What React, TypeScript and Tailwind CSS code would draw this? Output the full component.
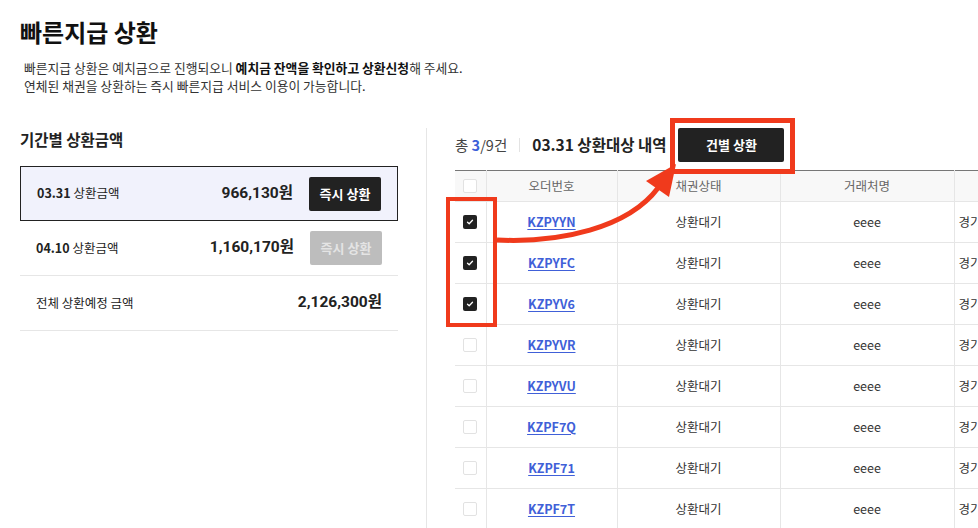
import React from 'react';

const font = { fontFamily: '"Noto Sans CJK KR", "Noto Sans", sans-serif' };
const num = { fontFamily: 'Roboto, "Noto Sans CJK KR", sans-serif' };

const rows = [
  { id: 'KZPYYN', checked: true },
  { id: 'KZPYFC', checked: true },
  { id: 'KZPYV6', checked: true },
  { id: 'KZPYVR', checked: false },
  { id: 'KZPYVU', checked: false },
  { id: 'KZPF7Q', checked: false },
  { id: 'KZPF71', checked: false },
  { id: 'KZPF7T', checked: false },
];

const Check: React.FC<{ checked: boolean }> = ({ checked }) =>
  checked ? (
    <span className="mx-auto flex h-[14px] w-[14px] items-center justify-center rounded-[2px] bg-[#222]">
      <svg width="8" height="8" viewBox="0 0 8 8">
        <path d="M1.5 4.2 L3.2 5.8 L6.5 2.3" fill="none" stroke="#fff" strokeWidth="1.3" strokeLinecap="round" strokeLinejoin="round" />
      </svg>
    </span>
  ) : (
    <span className="mx-auto block h-[14px] w-[14px] rounded-[2px] border border-[#e2e2e2] bg-white" />
  );

export default function App() {
  return (
    <div className="relative h-[528px] w-[978px] overflow-hidden bg-white text-[#222]" style={font}>
      <div className="pl-5 pt-4">
        <h1 className="text-[24px] font-bold leading-[32px] text-[#111]">빠른지급 상환</h1>
        <div className="mt-[11px] pl-1 text-[12.8px] leading-[18px] text-[#333]">
          <p>
            빠른지급 상환은 예치금으로 진행되오니 <b className="font-bold text-[#111]">예치금 잔액을 확인하고 상환신청</b>해 주세요.
          </p>
          <p>연체된 채권을 상환하는 즉시 빠른지급 서비스 이용이 가능합니다.</p>
        </div>
      </div>

      <div className="mt-[33px] flex">
        <div className="ml-5 w-[378px] shrink-0 whitespace-nowrap">
          <h2 className="text-[15.5px] font-bold leading-[22px] text-[#222]">기간별 상환금액</h2>
          <div className="mt-4">
            <div className="flex h-[55px] items-center border border-[#222] bg-[#f1f2fc] px-4">
              <span className="flex-1 text-[12.5px]">
                <b className="font-bold">03.31</b> 상환금액
              </span>
              <span className="text-[15.5px] font-bold" style={num}>966,130원</span>
              <button className="ml-4 h-[34px] w-[72px] rounded-[2px] bg-[#222] text-[13px] font-bold text-white">즉시 상환</button>
            </div>
            <div className="flex h-[55px] items-center border-b border-[#e6e6e6] px-4">
              <span className="flex-1 text-[12.5px]">
                <b className="font-bold">04.10</b> 상환금액
              </span>
              <span className="text-[15.5px] font-bold" style={num}>1,160,170원</span>
              <button className="ml-4 h-[34px] w-[72px] rounded-[2px] bg-[#bdbdbd] text-[13px] font-bold text-[#e4e4e4]">즉시 상환</button>
            </div>
            <div className="flex h-[55px] items-center border-b border-[#e6e6e6] px-4">
              <span className="flex-1 text-[12.5px]">전체 상환예정 금액</span>
              <span className="text-[15.5px] font-bold" style={num}>2,126,300원</span>
            </div>
          </div>
        </div>

        <div className="ml-7 h-[400px] shrink-0 border-l border-[#e6e6e6] pl-7">
          <div className="flex h-[34px] items-center whitespace-nowrap">
            <span className="text-[14.5px] text-[#444]">
              총 <b className="font-bold text-[#3d5fd9]">3</b>/9건
            </span>
            <span className="mx-3 h-[14px] w-px bg-[#e3e3e3]" />
            <span className="text-[15.5px] font-bold text-[#222]">03.31 상환대상 내역</span>
            <button className="ml-3 h-[34px] w-[106px] rounded-[2px] bg-[#222] text-[13px] font-bold text-white">건별 상환</button>
          </div>

          <table className="mt-2 w-[523px] table-fixed border-collapse text-[12.5px]">
            <colgroup>
              <col className="w-[31px]" />
              <col className="w-[131px]" />
              <col className="w-[163px]" />
              <col className="w-[174px]" />
              <col className="w-[24px]" />
            </colgroup>
            <thead>
              <tr className="h-[31px] border-t border-[#777] bg-[#f8f8f8] text-[#666]">
                <th className="border-b border-r border-[#e6e6e6] font-normal">
                  <Check checked={false} />
                </th>
                <th className="border-b border-r border-[#e6e6e6] font-normal">오더번호</th>
                <th className="border-b border-r border-[#e6e6e6] font-normal">채권상태</th>
                <th className="border-b border-r border-[#e6e6e6] font-normal">거래처명</th>
                <th className="border-b border-[#e6e6e6] font-normal" />
              </tr>
            </thead>
            <tbody>
              {rows.map((r) => (
                <tr key={r.id} className="h-[41px] text-[#333]">
                  <td className="border-b border-r border-[#e6e6e6]">
                    <Check checked={r.checked} />
                  </td>
                  <td className="border-b border-r border-[#e6e6e6] text-center">
                    <a className="font-bold text-[#4060d8] underline underline-offset-2">{r.id}</a>
                  </td>
                  <td className="border-b border-r border-[#e6e6e6] text-center">상환대기</td>
                  <td className="border-b border-r border-[#e6e6e6] text-center">eeee</td>
                  <td className="overflow-hidden whitespace-nowrap border-b border-[#e6e6e6] pl-1">경기</td>
                </tr>
              ))}
            </tbody>
          </table>
        </div>
      </div>

      {/* annotations */}
      <div className="absolute left-[446px] top-[197px] h-[130px] w-[51px] border-4 border-[#f03a1c]" />
      <div className="absolute left-[670px] top-[118px] h-[56px] w-[125px] border-[5px] border-[#f03a1c]" />
      <svg className="pointer-events-none absolute left-0 top-0" width="978" height="528">
        <path d="M497 240 C 560 243, 628 228, 658 188" fill="none" stroke="#f03a1c" strokeWidth="5" />
        <polygon points="676,164 646,181 669,197" fill="#f03a1c" />
      </svg>
    </div>
  );
}
